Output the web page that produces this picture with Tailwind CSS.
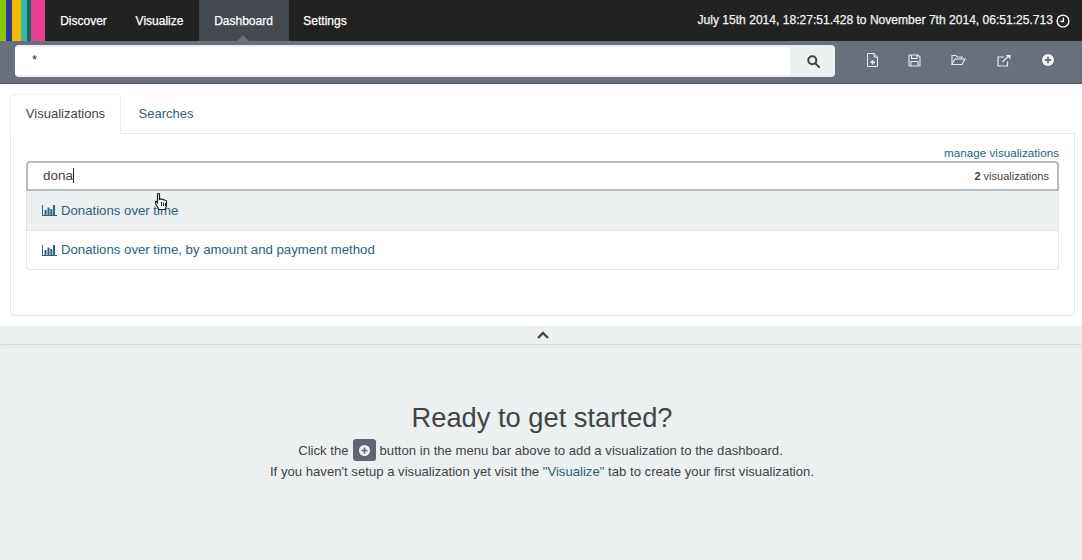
<!DOCTYPE html>
<html lang="en">
  <head>
    <meta charset="UTF-8" />
    <title>Kibana Dashboard</title>
    <script src="https://cdn.jsdelivr.net/npm/@tailwindcss/browser@4"></script>
  </head>
  <body class="bg-[#ecf0f1] font-['Liberation_Sans',Arial,sans-serif] text-[13.2px] text-[#444] w-[1082px] h-[560px] overflow-hidden">
    <!-- top nav -->
    <nav class="h-[41px] bg-[#222222] flex items-stretch text-white text-[12px] [-webkit-text-stroke:0.25px]">
      <div class="flex w-[45px]">
        <div class="w-[6px] bg-[#85c800]"></div>
        <div class="w-[6px] bg-[#2b3a9c]"></div>
        <div class="w-[9px] bg-[#f5bb00]"></div>
        <div class="w-[6px] bg-[#3cb6a8]"></div>
        <div class="w-[4px] bg-[#0a6e5e]"></div>
        <div class="w-[14px] bg-[#ea4090]"></div>
      </div>
      <a class="w-[77px] flex items-center justify-center">Discover</a>
      <a class="w-[77px] pr-[2px] flex items-center justify-center">Visualize</a>
      <a class="relative w-[90px] pr-[1px] flex items-center justify-center bg-[#44484f]">
        Dashboard
        <span class="absolute bottom-0 left-[38px] w-0 h-0 border-x-[6px] border-x-transparent border-b-[6px] border-b-[#696f7b]"></span>
      </a>
      <a class="w-[73px] pr-[1px] flex items-center justify-center">Settings</a>
      <div class="ml-auto flex items-center pr-[12px] gap-[3px] text-[#f2f2f2] text-[12.07px]">
        <span>July 15th 2014, 18:27:51.428 to November 7th 2014, 06:51:25.713</span>
        <svg class="w-[14px] h-[14px]" viewBox="0 0 14 14" fill="none" stroke="#fff" stroke-width="1.4"><circle cx="7" cy="7" r="5.9"/><path d="M7.4 3.5v4H4.4"/></svg>
      </div>
    </nav>

    <!-- search toolbar -->
    <div class="h-[43px] bg-[#69707c] border-b border-b-[#4f555f] flex items-center pl-[15px]">
      <div class="w-[820px] h-[32px] flex rounded-[4px] overflow-hidden border-2 border-[#ecf0f1] border-r-0 border-l-0 bg-white -mt-[2px]">
        <div class="flex-1 bg-white pl-[17px] text-[13px] leading-[25px] text-[#333]">*</div>
        <div class="w-[45px] pl-[1px] bg-[#ecf0f1] flex items-center justify-center">
          <svg class="w-[13px] h-[13px]" viewBox="0 0 13 13" fill="none" stroke="#444" stroke-width="2"><circle cx="5.3" cy="5.3" r="4"/><path d="M8.3 8.3l3.8 3.8" stroke-linecap="round"/></svg>
        </div>
      </div>
      <div class="flex items-center text-white -mt-[4px]">
        <span class="w-[44px] ml-[15px] flex justify-center">
          <svg class="w-[13px] h-[14px]" viewBox="0 0 13 14" fill="none" stroke="#e8eaed" stroke-width="1"><path d="M1.500 .5h6.500l3.500 3.500v9.500h-10zM8 .5v3.500h3.500"/><path d="M6.500 7v4.500M4.500 9.200h4.500" stroke-width="1.500"/></svg>
        </span>
        <span class="w-[41px] flex justify-center">
          <svg class="w-[13px] h-[13px]" viewBox="0 0 13 13" fill="none" stroke="#e8eaed" stroke-width="1.100"><path d="M1.500 1h8.500l2 2v8.500a.5 .5 0 0 1-.5 .5h-10a.5 .5 0 0 1-.5-.5v-10a.5 .5 0 0 1 .5-.5z"/><path d="M3.500 1v3.500h5.500v-3.500M3 12v-4.500h7v4.500"/></svg>
        </span>
        <span class="w-[46px] flex justify-center">
          <svg class="w-[15px] h-[12px]" viewBox="0 0 15 12" fill="none" stroke="#e8eaed" stroke-width="1.100"><path d="M1 10.500v-9h4l1 1.500h5v2"/><path d="M1 10.500h10l3-5.500h-10z"/></svg>
        </span>
        <span class="w-[46px] flex justify-center">
          <svg class="w-[15px] h-[13px]" viewBox="0 0 15 13" fill="none" stroke="#e8eaed" stroke-width="1.200"><path d="M10.500 7.500v4.500h-9.500v-9h6"/><path d="M5.500 8l6.500-6.500"/><path d="M9 1h4.500v4.500z" fill="#e8eaed" stroke="none"/></svg>
        </span>
        <span class="w-[42px] flex justify-center">
          <svg class="w-[12px] h-[12px]" viewBox="0 0 12 12"><circle cx="6" cy="6" r="6" fill="#f2f2f2"/><path d="M6 2.800v6.400M2.800 6h6.400" stroke="#69707c" stroke-width="1.800"/></svg>
        </span>
      </div>
    </div>

    <!-- config panel -->
    <section class="bg-white h-[242px] pt-[10px] pl-[10px] pr-[7px]">
      <div class="flex h-[40px] text-[13px]">
        <div class="w-[111px] h-[40px] bg-white border border-[#ecf0f1] border-b-white rounded-t-[4px] flex items-center justify-center text-[#444] relative z-10">Visualizations</div>
        <div class="w-[90px] flex items-center justify-center text-[#2f6178]">Searches</div>
      </div>
      <div class="-mt-px h-[183px] border border-[#e2e6e8] rounded-b-[4px] pl-[15px] pr-[15px]">
        <div class="text-right text-[11.700px] leading-[13px] pt-[12px] text-[#2f6178]">manage visualizations</div>
        <div class="mt-[2px] h-[30px] border-2 border-[#b4bcc2] rounded-t-[4px] flex items-center justify-between pl-[15px] pr-[8px]">
          <span class="text-[13.500px] text-[#444] border-r border-r-[#222] leading-[15px] -mt-[2px]">dona</span>
          <span class="text-[11px] text-[#444] mt-[1px]"><b>2</b> visualizations</span>
        </div>
        <div class="border border-t-0 border-[#dfe3e5] rounded-b-[4px] text-[#2f6178]">
          <div class="h-[40px] bg-[#ecf0f1] border-b border-[#dfe3e5] flex items-center pl-[15px] gap-[4px]">
            <svg class="w-[15px] h-[11px]" viewBox="0 0 15 11" fill="#2f6178"><path d="M0 0h1v10h14v1H0z"/><rect x="2.500" y="5" width="2" height="5"/><rect x="5.500" y="2.500" width="2" height="7.500"/><rect x="8.300" y="4" width="2" height="6"/><rect x="11" y="0" width="2" height="10"/></svg>
            <span>Donations over time</span>
          </div>
          <div class="h-[38px] flex items-center pl-[15px] gap-[4px]">
            <svg class="w-[15px] h-[11px]" viewBox="0 0 15 11" fill="#2f6178"><path d="M0 0h1v10h14v1H0z"/><rect x="2.500" y="5" width="2" height="5"/><rect x="5.500" y="2.500" width="2" height="7.500"/><rect x="8.300" y="4" width="2" height="6"/><rect x="11" y="0" width="2" height="10"/></svg>
            <span>Donations over time, by amount and payment method</span>
          </div>
        </div>
      </div>
    </section>

    <!-- collapse handle -->
    <div class="h-[19px] bg-[#ecf0f1] border-b border-[#d8dcde] shadow-[0_3px_3px_rgba(0,0,0,0.02)] flex items-center justify-center">
      <svg class="w-[12px] h-[8px] ml-[3px]" viewBox="0 0 12 8" fill="none" stroke="#444" stroke-width="2.400"><path d="M1 7l5-5 5 5"/></svg>
    </div>

    <!-- empty dashboard message -->
    <div class="text-center pt-[58px] text-[13.15px]">
      <h2 class="text-[27.300px] leading-[30px] text-[#444] mb-[6px] pl-[2px]">Ready to get started?</h2>
      <p class="leading-[21px] flex items-center justify-center gap-[4px] h-[22px] pr-[1px]">
        Click the
        <span class="inline-flex w-[23px] h-[22px] bg-[#5f6672] rounded-[3px] items-center justify-center">
          <svg class="w-[11px] h-[11px]" viewBox="0 0 12 12"><circle cx="6" cy="6" r="6" fill="#f2f2f2"/><path d="M6 2.800v6.400M2.800 6h6.400" stroke="#5f6672" stroke-width="1.800"/></svg>
        </span>
        button in the menu bar above to add a visualization to the dashboard.
      </p>
      <p class="leading-[21px] pl-[2px]">If you haven't setup a visualization yet visit the <a class="text-[#2f6178]">"Visualize"</a> tab to create your first visualization.</p>
    </div>

    <!-- mouse cursor over the first result -->
    <svg class="absolute left-[155px] top-[193px] w-[14px] h-[18px]" viewBox="0 0 14 18" fill="#fff" stroke="#222" stroke-width="1.200"><path d="M2.500 1.500a1 1 0 0 1 2 0v5l1-.5 1.500.300 1.500.400 1.500.500 1.500.800v5l-1.500 3.500h-6l-3-5-1-3 1.500-.2 1 1.500z"/><path d="M6.500 9v4M8.500 9.500v3.500M10.500 10v3" stroke-width="1"/></svg>
  </body>
</html>
